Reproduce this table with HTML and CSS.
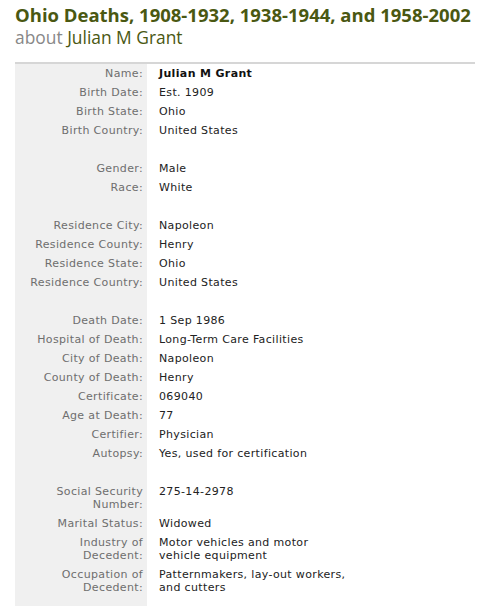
FILE: index.html
```html
<!DOCTYPE html>
<html>
<head>
<meta charset="utf-8">
<link rel="stylesheet" href="styles.css">
</head>
<body>
<div class="page">
  <h1 class="title">Ohio Deaths, 1908-1932, 1938-1944, and 1958-2002</h1>
  <div class="subtitle"><span class="about">about</span> Julian M Grant</div>
  <div class="record">
    <div class="label">Name:</div><div class="value name">Julian M Grant</div>
    <div class="label">Birth Date:</div><div class="value">Est. 1909</div>
    <div class="label">Birth State:</div><div class="value">Ohio</div>
    <div class="label">Birth Country:</div><div class="value">United States</div>
    <div class="label blank"></div><div class="value blank"></div>
    <div class="label">Gender:</div><div class="value">Male</div>
    <div class="label">Race:</div><div class="value">White</div>
    <div class="label blank"></div><div class="value blank"></div>
    <div class="label">Residence City:</div><div class="value">Napoleon</div>
    <div class="label">Residence County:</div><div class="value">Henry</div>
    <div class="label">Residence State:</div><div class="value">Ohio</div>
    <div class="label">Residence Country:</div><div class="value">United States</div>
    <div class="label blank"></div><div class="value blank"></div>
    <div class="label">Death Date:</div><div class="value">1 Sep 1986</div>
    <div class="label">Hospital of Death:</div><div class="value">Long-Term Care Facilities</div>
    <div class="label">City of Death:</div><div class="value">Napoleon</div>
    <div class="label">County of Death:</div><div class="value">Henry</div>
    <div class="label">Certificate:</div><div class="value">069040</div>
    <div class="label">Age at Death:</div><div class="value">77</div>
    <div class="label">Certifier:</div><div class="value">Physician</div>
    <div class="label">Autopsy:</div><div class="value">Yes, used for certification</div>
    <div class="label blank"></div><div class="value blank"></div>
    <div class="label">Social Security<br>Number:</div><div class="value">275-14-2978</div>
    <div class="label">Marital Status:</div><div class="value">Widowed</div>
    <div class="label">Industry of<br>Decedent:</div><div class="value">Motor vehicles and motor<br>vehicle equipment</div>
    <div class="label">Occupation of<br>Decedent:</div><div class="value">Patternmakers, lay-out workers,<br>and cutters</div>
    <div class="label blank"></div><div class="value blank"></div>
  </div>
</div>
</body>
</html>
```
FILE: styles.css
```css
html, body {
  margin: 0;
  padding: 0;
  background: #ffffff;
}
.page {
  padding: 3px 0 0 15px;
  width: 460px;
}
.title {
  margin: 0;
  font-family: "Open Sans", "DejaVu Sans", sans-serif;
  font-weight: 700;
  font-size: 18.5px;
  line-height: 23px;
  color: #4a5812;
  white-space: nowrap;
}
.subtitle {
  font-family: "Open Sans", "DejaVu Sans", sans-serif;
  font-size: 17.4px;
  line-height: 23px;
  color: #4a5812;
  margin-bottom: 13px;
}
.about {
  color: #888888;
}
.record {
  display: grid;
  grid-template-columns: 132px 1fr;
  border-top: 2px solid #d6d6d6;
  font-family: "DejaVu Sans", Verdana, sans-serif;
  font-size: 11px;
  line-height: 13px;
  letter-spacing: 0.35px;
}
.label {
  background: #f0f0f0;
  color: #6e6e6e;
  text-align: right;
  padding: 3px 4px 3px 0;
}
.value {
  color: #222222;
  padding: 3px 0 3px 12px;
}
.blank {
  height: 13px;
}
.name {
  font-weight: 700;
  color: #111111;
}
```
